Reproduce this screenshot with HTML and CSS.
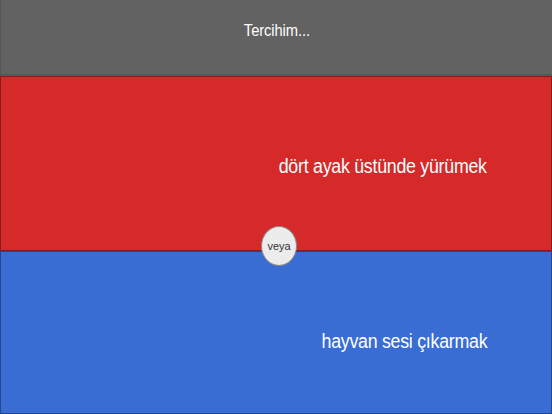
FILE: index.html
```html
<!DOCTYPE html>
<html>
<head>
<meta charset="utf-8">
<link rel="stylesheet" href="styles.css">
</head>
<body>
<div class="app">
  <header class="header"><span class="title">Tercihim...</span></header>
  <div class="choices">
    <div class="choice red"><span class="label">dört ayak üstünde yürümek</span></div>
    <div class="choice blue"><span class="label">hayvan sesi çıkarmak</span></div>
    <div class="or">veya</div>
  </div>
</div>
</body>
</html>
```
FILE: styles.css
```css
html, body {
  margin: 0;
  padding: 0;
}
body {
  width: 552px;
  height: 414px;
  overflow: hidden;
  font-family: "Liberation Sans", Arial, sans-serif;
  background: #3a6cd3;
}
.app {
  display: flex;
  flex-direction: column;
  height: 414px;
}
.header {
  height: 76px;
  flex: none;
  background: #626262;
  border-left: 1px solid #555;
  border-bottom: 2px solid #585858;
  display: flex;
  justify-content: center;
  padding-top: 21px;
  box-sizing: border-box;
}
.title {
  color: #fff;
  font-size: 16px;
  transform: scaleX(0.92);
  letter-spacing: -0.1px;
  line-height: 20px;
  height: 20px;
}
.choices {
  position: relative;
  flex: 1;
  display: flex;
  flex-direction: column;
}
.choice {
  display: flex;
  align-items: center;
  justify-content: flex-end;
  padding-right: 64px;
  box-sizing: border-box;
  color: #fff;
  font-size: 20px;
  border: 1px solid rgba(0, 0, 0, 0.35);
}
.label {
  transform: scaleX(0.89);
  transform-origin: right center;
  letter-spacing: -0.3px;
}
.red {
  height: 175px;
  flex: none;
  background: #d5292a;
}
.red .label {
  margin-top: 6px;
}
.blue {
  flex: 1;
  background: #3a6dd4;
}
.blue .label {
  margin-top: 18px;
}
.or {
  position: absolute;
  left: 261px;
  top: 150px;
  width: 34px;
  height: 38px;
  border-radius: 50%;
  background: #ececec;
  border: 1px solid #8a8a8a;
  display: flex;
  align-items: center;
  justify-content: center;
  font-size: 11px;
  color: #333;
}
```
